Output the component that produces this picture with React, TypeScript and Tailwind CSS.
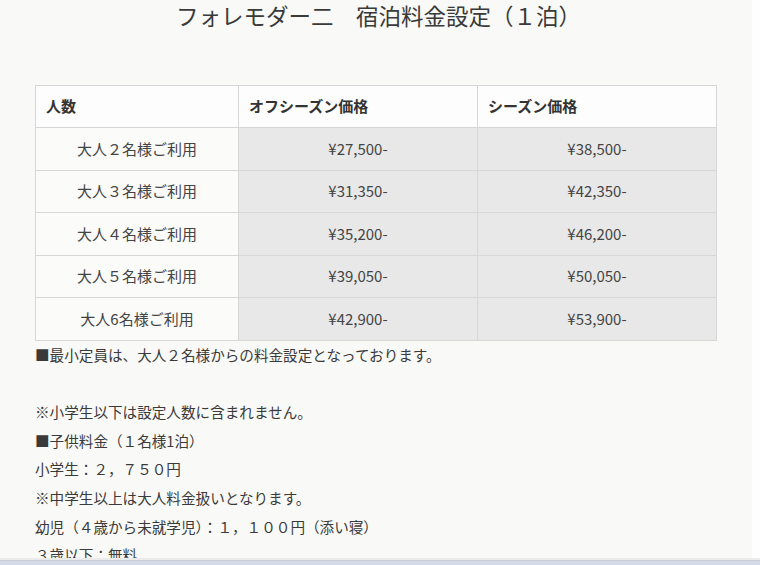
import React from "react";

const rows = [
  { label: "大人２名様ご利用", off: "¥27,500-", season: "¥38,500-" },
  { label: "大人３名様ご利用", off: "¥31,350-", season: "¥42,350-" },
  { label: "大人４名様ご利用", off: "¥35,200-", season: "¥46,200-" },
  { label: "大人５名様ご利用", off: "¥39,050-", season: "¥50,050-" },
  { label: "大人6名様ご利用", off: "¥42,900-", season: "¥53,900-" },
];

const notes = [
  "■最小定員は、大人２名様からの料金設定となっております。",
  "",
  "※小学生以下は設定人数に含まれません。",
  "■子供料金（１名様1泊）",
  "小学生：２，７５０円",
  "※中学生以上は大人料金扱いとなります。",
  "幼児（４歳から未就学児）：１，１００円（添い寝）",
  "３歳以下：無料",
];

export default function App() {
  return (
    <div
      className="flex h-[565px] w-[760px] flex-col overflow-hidden bg-[#fdfdfd] text-[#333]"
      style={{ fontFamily: '"Noto Sans CJK JP", "Noto Sans", sans-serif' }}
    >
      <div className="flex min-h-0 flex-1">
        <div className="w-[752px] overflow-hidden bg-[#f9f9f7] pl-[35px]">
          <h1 className="h-[30px] pr-[30px] text-center text-[22.5px] font-normal leading-[30px] text-[#3a3a3a]">
            フォレモダー二　宿泊料金設定（１泊）
          </h1>

          <table className="mt-[55px] w-[681px] table-fixed border-collapse text-[15px]">
            <colgroup>
              <col className="w-[203px]" />
              <col className="w-[239px]" />
              <col className="w-[239px]" />
            </colgroup>
            <thead>
              <tr className="h-[42px] bg-[#fdfdfd]">
                <th className="border border-[#d7d7d7] px-[10px] text-left font-bold">人数</th>
                <th className="border border-[#d7d7d7] px-[10px] text-left font-bold">オフシーズン価格</th>
                <th className="border border-[#d7d7d7] px-[10px] text-left font-bold">シーズン価格</th>
              </tr>
            </thead>
            <tbody>
              {rows.map((r) => (
                <tr key={r.label} className="h-[42.6px]">
                  <td className="border border-[#d7d7d7] bg-[#fbfbf9] text-center text-[#444]">{r.label}</td>
                  <td className="border border-[#d7d7d7] bg-[#e8e8e8] text-center text-[#444]">{r.off}</td>
                  <td className="border border-[#d7d7d7] bg-[#e8e8e8] text-center text-[#444]">{r.season}</td>
                </tr>
              ))}
            </tbody>
          </table>

          <div className="text-[14.6px] leading-[28.6px] text-[#3a3a3a]">
            {notes.map((n, i) => (
              <p key={i} className="h-[28.6px] whitespace-nowrap">
                {n}
              </p>
            ))}
          </div>
        </div>
        <div className="flex-1 bg-[#fefefe]" />
      </div>
      <div className="h-[2px] bg-[#ebebeb]" />
      <div className="h-px bg-[#c9ccd2]" />
      <div className="h-[4px] bg-[#d3dbeb]" />
    </div>
  );
}
